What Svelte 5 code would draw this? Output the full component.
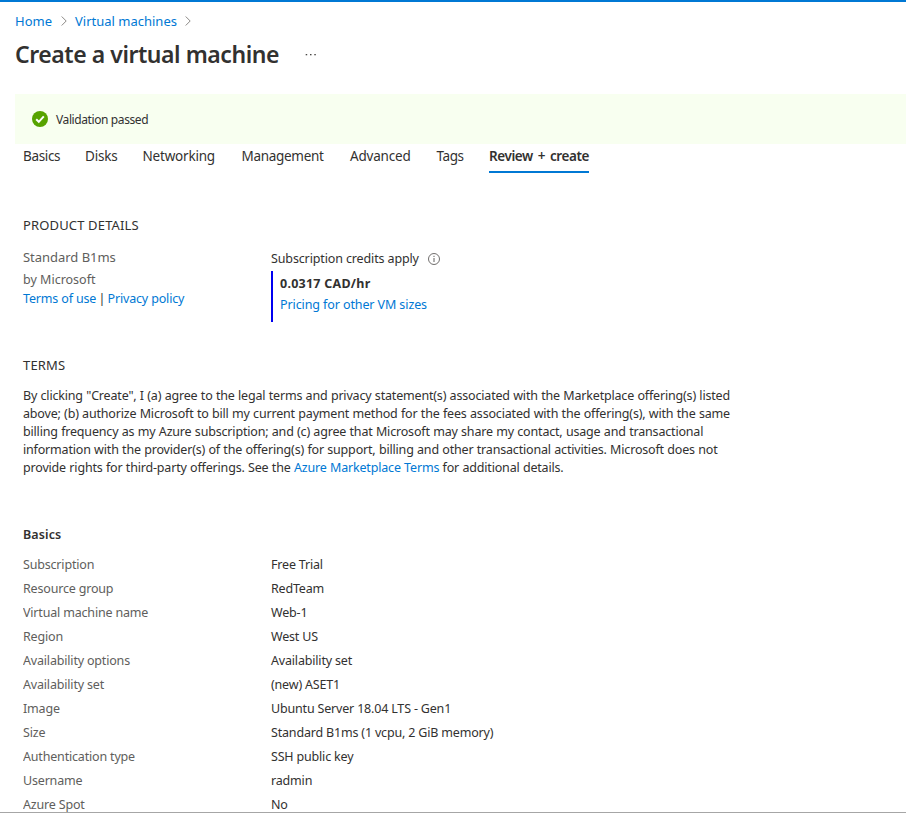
<script>
  const tabs = [
    { label: 'Basics', width: 37, gap: 25, spacing: -0.35 },
    { label: 'Disks', width: 32, gap: 25.5, spacing: -0.2 },
    { label: 'Networking', width: 72, gap: 27, spacing: -0.2 },
    { label: 'Management', width: 82, gap: 26.5, spacing: -0.3 },
    { label: 'Advanced', width: 61, gap: 25.5, spacing: -0.2 },
    { label: 'Tags', width: 28, gap: 24.5, spacing: -0.4 },
    { label: 'Review + create', width: 100, gap: 0, spacing: -0.42, active: true }
  ];

  const terms = [
    'By clicking "Create", I (a) agree to the legal terms and privacy statement(s) associated with the Marketplace offering(s) listed',
    'above; (b) authorize Microsoft to bill my current payment method for the fees associated with the offering(s), with the same',
    'billing frequency as my Azure subscription; and (c) agree that Microsoft may share my contact, usage and transactional',
    'information with the provider(s) of the offering(s) for support, billing and other transactional activities. Microsoft does not'
  ];

  const rows = [
    ['Subscription', 'Free Trial'],
    ['Resource group', 'RedTeam'],
    ['Virtual machine name', 'Web-1'],
    ['Region', 'West US'],
    ['Availability options', 'Availability set'],
    ['Availability set', '(new) ASET1'],
    ['Image', 'Ubuntu Server 18.04 LTS - Gen1'],
    ['Size', 'Standard B1ms (1 vcpu, 2 GiB memory)'],
    ['Authentication type', 'SSH public key'],
    ['Username', 'radmin'],
    ['Azure Spot', 'No']
  ];
</script>

{#snippet chevron()}
  <svg class="chevron" width="6" height="10" viewBox="0 0 6 10" aria-hidden="true">
    <path d="M.7.5 5.2 5 .7 9.5" fill="none" stroke="#8a8886" stroke-width="1" />
  </svg>
{/snippet}

<div class="page">
  <nav class="crumbs">
    <a href="#home" style:width="38px">Home</a>
    {@render chevron()}
    <a href="#vms" style:width="102px">Virtual machines</a>
    {@render chevron()}
  </nav>

  <header>
    <h1>Create a virtual machine</h1>
    <svg width="12" height="4" viewBox="0 0 12 4" fill="#484644" aria-label="More">
      <rect x=".7" y="2" width="1.5" height="1.3" /><rect x="5" y="2" width="1.5" height="1.3" /><rect x="9.3" y="2" width="1.5" height="1.3" />
    </svg>
  </header>

  <div class="banner">
    <svg width="16" height="16" viewBox="0 0 16 16" aria-hidden="true">
      <circle cx="8" cy="8" r="8" fill="#57a300" />
      <path d="M4.2 8.2 6.8 10.8 11.8 5.3" fill="none" stroke="#fff" stroke-width="2" />
    </svg>
    <span>Validation passed</span>
  </div>

  <div class="tabs" role="tablist">
    {#each tabs as t}
      <div
        class="tab"
        class:active={t.active}
        role="tab"
        style:width="{t.width}px"
        style:margin-right="{t.gap}px"
        style:letter-spacing="{t.spacing}px">{t.label}</div>
    {/each}
  </div>

  <h2 class="product-title">PRODUCT DETAILS</h2>
  <section class="product">
    <div class="offer">
      <div class="name">Standard B1ms</div>
      <div class="by">by Microsoft</div>
      <div class="links"><a href="#terms">Terms of use</a> | <a href="#privacy">Privacy policy</a></div>
    </div>
    <div class="cost">
      <div class="credits">
        <span>Subscription credits apply</span>
        <svg width="12" height="12" viewBox="0 0 12 12" aria-hidden="true">
          <circle cx="6" cy="6" r="5.5" fill="none" stroke="#605e5c" stroke-width=".9" />
          <path d="M6 5v4M6 2.8v1.2" stroke="#605e5c" stroke-width="1" />
        </svg>
      </div>
      <div class="price">
        <strong>0.0317 CAD/hr</strong>
        <a href="#pricing">Pricing for other VM sizes</a>
      </div>
    </div>
  </section>

  <h2 class="terms-title">TERMS</h2>
  <div class="terms">
    {#each terms as line}
      <div>{line}</div>
    {/each}
    <div>provide rights for third-party offerings. See the <a href="#market">Azure Marketplace Terms</a> for additional details.</div>
  </div>

  <h3>Basics</h3>
  <dl>
    {#each rows as [key, value]}
      <div class="row"><dt>{key}</dt><dd>{value}</dd></div>
    {/each}
  </dl>
  <div class="divider"></div>
</div>

<style>
  :global(body) { background: #fff; overflow: hidden; }
  .page {
    box-sizing: border-box;
    width: 906px;
    height: 816px;
    overflow: hidden;
    border-top: 2px solid #0078d4;
    background: #fff;
    color: #323130;
    font: 12.5px/18px "Noto Sans", "Open Sans", sans-serif;
    letter-spacing: -0.18px;
    white-space: nowrap;
    display: flex;
    flex-direction: column;
  }
  a { color: #0078d4; text-decoration: none; }
  h1, h2, h3, dl, dd { margin: 0; }
  .crumbs { display: flex; align-items: center; height: 20px; margin: 9px 0 0 15px; font-size: 13px; letter-spacing: 0; }
  .chevron { margin: 0 8px; }
  header { display: flex; align-items: center; height: 32px; margin: 7px 0 0 15px; }
  h1 { width: 290px; font-size: 23px; line-height: 32px; height: 32px; font-weight: 600; letter-spacing: -0.45px; }
  .banner { display: flex; align-items: center; gap: 8px; box-sizing: border-box; height: 50px; margin: 24px 0 0 15px; padding-left: 17px; background: #f8fff0; font-size: 12px; letter-spacing: -0.4px; }
  .banner span { padding-top: 2px; }
  .tabs { display: flex; height: 29px; padding-left: 23px; font-size: 13.5px; line-height: 24px; }
  .tab { box-sizing: border-box; height: 29px; }
  .active { border-bottom: 2px solid #0078d4; font-weight: 600; word-spacing: 1.8px; }
  h2 { margin-left: 23px; height: 18px; font-size: 13px; font-weight: 400; letter-spacing: 0.15px; }
  .product-title { margin-top: 43px; }
  .product { display: flex; height: 78px; margin-left: 23px; padding-top: 12px; }
  .offer { width: 248px; color: #605e5c; }
  .name { height: 23px; line-height: 22px; font-size: 13px; letter-spacing: -0.03px; }
  .by { height: 21px; padding-top: 0; line-height: 22px; letter-spacing: 0; }
  .links { height: 18px; color: #323130; letter-spacing: -0.16px; word-spacing: -0.8px; }
  .links a { word-spacing: 0; }
  .credits { display: flex; align-items: center; gap: 9px; height: 25px; letter-spacing: -0.13px; }
  .price { display: flex; flex-direction: column; box-sizing: border-box; height: 51px; border-left: 2px solid #0000f0; padding: 2px 0 0 7px; line-height: 21px; letter-spacing: -0.1px; }
  .price strong { letter-spacing: 0.25px; }
  .terms-title { margin-top: 32px; }
  .terms { margin: 13px 0 0 23px; letter-spacing: -0.178px; word-spacing: 0.3px; }
  h3 { margin: 48px 0 0 23px; height: 20px; font-size: 12.5px; line-height: 20px; font-weight: 600; letter-spacing: 0.1px; }
  dl { margin: 8px 0 0 23px; height: 259px; overflow: hidden; line-height: 24px; }
  .row { display: flex; height: 24px; }
  dt { width: 248px; color: #605e5c; }
  .divider { height: 1px; background: #a6a6a6; }
</style>
